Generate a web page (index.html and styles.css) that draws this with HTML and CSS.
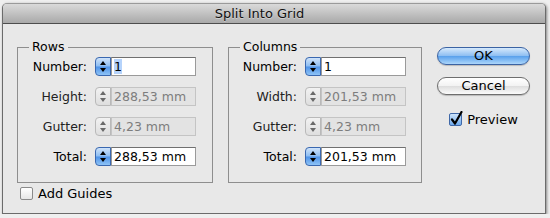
FILE: index.html
```html
<!DOCTYPE html>
<html lang="en">
<head>
    <meta charset="UTF-8">
    <title>Split Into Grid</title>
    <link rel="stylesheet" href="styles.css">
</head>
<body>

<div class="window">
    <div class="titlebar">Split Into Grid</div>

    <div class="content">
        <div class="main">
            <fieldset class="group rows">
                <legend>Rows</legend>
                <div class="fields">
                    <div class="field">
                        <label>Number:</label>
                        <span class="spinner"></span>
                        <span class="input"><span class="selected">1</span></span>
                    </div>
                    <div class="field disabled">
                        <label>Height:</label>
                        <span class="spinner"></span>
                        <span class="input">288,53 mm</span>
                    </div>
                    <div class="field disabled">
                        <label>Gutter:</label>
                        <span class="spinner"></span>
                        <span class="input">4,23 mm</span>
                    </div>
                    <div class="field">
                        <label>Total:</label>
                        <span class="spinner"></span>
                        <span class="input">288,53 mm</span>
                    </div>
                </div>
            </fieldset>

            <fieldset class="group cols">
                <legend>Columns</legend>
                <div class="fields">
                    <div class="field">
                        <label>Number:</label>
                        <span class="spinner"></span>
                        <span class="input">1</span>
                    </div>
                    <div class="field disabled">
                        <label>Width:</label>
                        <span class="spinner"></span>
                        <span class="input">201,53 mm</span>
                    </div>
                    <div class="field disabled">
                        <label>Gutter:</label>
                        <span class="spinner"></span>
                        <span class="input">4,23 mm</span>
                    </div>
                    <div class="field">
                        <label>Total:</label>
                        <span class="spinner"></span>
                        <span class="input">201,53 mm</span>
                    </div>
                </div>
            </fieldset>

            <div class="buttons">
                <button class="btn ok">OK</button>
                <button class="btn cancel">Cancel</button>
                <label class="check preview">
                    <span class="box on">
                        <svg class="tick" width="14" height="15" viewBox="0 0 14 15">
                            <path d="M3 8.5 L6 12.5 L12.5 1" fill="none" stroke="#000" stroke-width="2.2" stroke-linecap="round" stroke-linejoin="round"/>
                        </svg>
                    </span>
                    Preview
                </label>
            </div>
        </div>

        <label class="check add-guides"><span class="box"></span>Add Guides</label>
    </div>
</div>

</body>
</html>
```

FILE: styles.css
```css
body {
    margin: 0;
    padding: 0;
    background-color: #efefef;
    font-family: "DejaVu Sans", Verdana, sans-serif;
    font-size: 12.5px;
    color: #000;
}
.window {
    margin: 3px 0 0 2px;
    width: 544px;
    height: 211px;
    box-sizing: border-box;
    border: 1px solid #6b6b6b;
    border-top-color: #9a9a9a;
    border-radius: 5px 5px 0 0;
    background-color: #e8e8e8;
    box-shadow: 1px 1px 3px rgba(0, 0, 0, 0.45);
    overflow: hidden;
}
.titlebar {
    height: 19px;
    line-height: 19px;
    border-bottom: 1px solid #4d4d4d;
    background: linear-gradient(#dadada, #a9a9a9);
    text-align: center;
    font-size: 13px;
    color: #111;
    padding-right: 29px;
    text-shadow: 0 1px 0 rgba(255, 255, 255, 0.4);
}
.content {
    padding: 15px 0 0 14px;
}
.main {
    display: flex;
    align-items: flex-start;
    gap: 15px;
}
/* Group boxes */
.group {
    margin: 0;
    padding: 2px 0 16px 0;
    border: 1px solid #8e8e8e;
    box-sizing: border-box;
    min-width: 0;
}
.rows {
    width: 196px;
}
.cols {
    width: 194px;
}
.group legend {
    margin-left: 11px;
    padding: 0 3px;
    line-height: 16px;
}
.fields {
    display: flex;
    flex-direction: column;
    gap: 11px;
}
.field {
    display: flex;
    align-items: center;
    height: 19px;
}
.field label {
    width: 69px;
    margin-right: 8px;
    text-align: right;
}
.cols .field label {
    width: 68px;
}
.field.disabled label {
    color: #222;
}
/* Stepper arrows */
.spinner {
    width: 16px;
    height: 19px;
    box-sizing: border-box;
    border: 1px solid #3a68b0;
    border-radius: 4px 0 0 4px;
    background: linear-gradient(#cfe3fa, #8dbdf1 48%, #4f93e8 52%, #8ec3f6);
    display: flex;
    flex-direction: column;
    align-items: center;
    justify-content: center;
    gap: 3px;
}
.spinner::before,
.spinner::after {
    content: "";
    width: 0;
    height: 0;
    border-left: 3px solid transparent;
    border-right: 3px solid transparent;
}
.spinner::before {
    border-bottom: 4px solid #000;
}
.spinner::after {
    border-top: 4px solid #000;
}
.disabled .spinner {
    border-color: #b9b9b9;
    background: linear-gradient(#f2f2f2, #dedede);
}
.disabled .spinner::before {
    border-bottom-color: #6a6a6a;
}
.disabled .spinner::after {
    border-top-color: #6a6a6a;
}
.input {
    width: 85px;
    height: 19px;
    box-sizing: border-box;
    border: 1px solid #9a9a9a;
    border-top-color: #707070;
    background-color: #fff;
    padding-left: 2px;
    line-height: 17px;
    white-space: nowrap;
}
.disabled .input {
    background-color: #e3e3e3;
    border-color: #c4c4c4;
    color: #7d7d7d;
}
.selected {
    background-color: #b5d3fb;
}
/* Buttons */
.buttons {
    width: 93px;
    padding-top: 8px;
    display: flex;
    flex-direction: column;
    align-items: center;
}
.btn {
    width: 93px;
    height: 18px;
    box-sizing: border-box;
    border: 1px solid #6e6e6e;
    border-radius: 9px;
    padding: 0;
    font-family: inherit;
    font-size: 13px;
    line-height: 16px;
    color: #000;
    background: linear-gradient(#ffffff, #f3f3f3 48%, #dedede 52%, #fbfbfb);
    box-shadow: 0 1px 1px rgba(0, 0, 0, 0.2);
}
.ok {
    border-color: #3b63a3;
    background: linear-gradient(#d6e9fc, #8fbff2 48%, #5aa1ec 52%, #acd6fb);
}
.cancel {
    margin-top: 12px;
}
/* Checkboxes */
.check {
    display: flex;
    align-items: center;
    gap: 5px;
    font-size: 13px;
}
.box {
    position: relative;
    width: 13px;
    height: 13px;
    box-sizing: border-box;
    border: 1px solid #8a8a8a;
    border-radius: 2px;
    background: linear-gradient(#ffffff, #e6e6e6);
}
.box.on {
    border-color: #3f68a8;
    background: linear-gradient(#cde3fa, #6fabee);
}
.tick {
    position: absolute;
    left: -1px;
    top: -3px;
}
.preview {
    margin-top: 17px;
}
.add-guides {
    margin: 3px 0 0 3px;
}
```
